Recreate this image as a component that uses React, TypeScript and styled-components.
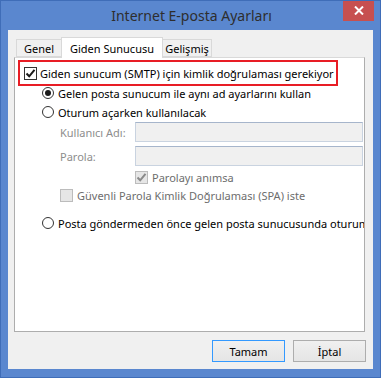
import React from "react";
import styled, {createGlobalStyle} from "styled-components";

const Global = createGlobalStyle`
  html, body {
    margin: 0;
    padding: 0;
    background: #5a87cf;
  }
  * {
    box-sizing: border-box;
  }
`

const Window = styled.div`
  width: 381px;
  height: 378px;
  display: flex;
  flex-direction: column;
  background: #5a87cf;
  border: 1px solid #3f6db8;
  font-family: "Noto Sans", "Open Sans", sans-serif;
  font-size: 11px;
  color: #000;
  overflow: hidden;
`

const TitleBar = styled.div`
  height: 30px;
  display: flex;
  align-items: flex-start;
  position: relative;
`

const Title = styled.div`
  flex: 1;
  text-align: center;
  font-size: 14px;
  color: #2e2e2e;
  padding-top: 5px;
  padding-left: 2px;
`

const CloseButton = styled.div`
  position: absolute;
  top: -1px;
  right: 6px;
  width: 31px;
  height: 21px;
  background: #c75050;
  display: flex;
  align-items: center;
  justify-content: center;
`

const Client = styled.div`
  flex: 1;
  margin: 0 7px 8px 7px;
  background: #f0f0f0;
  display: flex;
  flex-direction: column;
  padding: 7px 8px 7px 6px;
`

const TabRow = styled.div`
  display: flex;
  align-items: flex-end;
  height: 20px;
  padding-left: 2px;
  position: relative;
  z-index: 1;
`

const Tab = styled.div<{ $active?: boolean; $width: number }>`
  width: ${p => p.$width}px;
  height: ${p => (p.$active ? "21px" : "18px")};
  margin-bottom: ${p => (p.$active ? "-1px" : "0")};
  padding-top: ${p => (p.$active ? "3px" : "1px")};
  border: 1px solid #d9d9d9;
  border-bottom: ${p => (p.$active ? "none" : "1px solid #d9d9d9")};
  background: ${p => (p.$active ? "#ffffff" : "#f0f0f0")};
  margin-left: ${p => (p.$active ? "-1px" : "0")};
  margin-right: ${p => (p.$active ? "-1px" : "0")};
  color: #000;
  text-align: center;
  white-space: nowrap;
  line-height: 15px;
`

const Panel = styled.div`
  height: 275px;
  background: #fff;
  border: 1px solid #adadad;
  border-top-color: #d9d9d9;
  padding: 2px 0 0 3px;
  display: flex;
  flex-direction: column;
  overflow: hidden;
`

const Highlight = styled.div`
  width: 320px;
  height: 26px;
  flex: none;
  border: 2px solid #e81d25;
  display: flex;
  align-items: center;
  padding-left: 4px;
  gap: 3px;
  white-space: nowrap;
`

const Row = styled.div<{ $indent: number; $top: number; $muted?: boolean }>`
  display: flex;
  align-items: center;
  gap: 4px;
  padding-left: ${p => p.$indent}px;
  margin-top: ${p => p.$top}px;
  height: 16px;
  flex: none;
  white-space: nowrap;
  color: ${p => (p.$muted ? "#6d6d6d" : "#000")};
`

const FieldRow = styled.div<{ $top: number }>`
  display: flex;
  align-items: center;
  padding-left: 42px;
  margin-top: ${p => p.$top}px;
  height: 20px;
  flex: none;
`

const FieldLabel = styled.div`
  width: 75px;
  color: #8d8d8d;
`

const Field = styled.div`
  width: 228px;
  height: 20px;
  background: #f0f0f0;
  border: 1px solid #c9d3e0;
  border-top-color: #a6b5cb;
`

const Box = styled.div<{ $disabled?: boolean }>`
  width: 13px;
  height: 13px;
  flex: none;
  border: 1px solid ${p => (p.$disabled ? "#bcbcbc" : "#333")};
  background: ${p => (p.$disabled ? "#e6e6e6" : "#fff")};
  display: flex;
  align-items: center;
  justify-content: center;
`

const Radio = styled.div<{ $on?: boolean }>`
  width: 12px;
  height: 12px;
  flex: none;
  border-radius: 50%;
  border: 1px solid #333;
  background: #fff;
  display: flex;
  align-items: center;
  justify-content: center;
  &::after {
    content: "";
    width: 6px;
    height: 6px;
    border-radius: 50%;
    background: ${p => (p.$on ? "#1a1a1a" : "transparent")};
  }
`

const Footer = styled.div`
  display: flex;
  justify-content: flex-end;
  gap: 8px;
  margin-top: 8px;
`

const Button = styled.div<{ $default?: boolean }>`
  width: 73px;
  height: 22px;
  border: 1px solid ${p => (p.$default ? "#3399ff" : "#adadad")};
  background: linear-gradient(#f0f0f0, #e5e5e5);
  display: flex;
  align-items: center;
  justify-content: center;
  margin-right: ${p => (p.$default ? "0" : "-1px")};
`

function Check({color}: { color: string }) {
  return (
    <svg width="11" height="11" viewBox="0 0 11 11">
      <path d="M1.5 5.5 L4.2 8.3 L9.5 1.8" fill="none" stroke={color} strokeWidth="2" />
    </svg>
  )
}

export default function App() {
  return (
    <>
      <Global />
      <Window>
        <TitleBar>
          <Title>Internet E-posta Ayarları</Title>
          <CloseButton>
            <svg width="10" height="9" viewBox="0 0 10 9">
              <path d="M1 0.5 L9 8.5 M9 0.5 L1 8.5" stroke="#fff" strokeWidth="2" />
            </svg>
          </CloseButton>
        </TitleBar>
        <Client>
          <TabRow>
            <Tab $width={46}>Genel</Tab>
            <Tab $active $width={102}>Giden Sunucusu</Tab>
            <Tab $width={50}>Gelişmiş</Tab>
          </TabRow>
          <Panel>
            <Highlight>
              <Box><Check color="#1a1a1a" /></Box>
              <span>Giden sunucum (SMTP) için kimlik doğrulaması gerekiyor</span>
            </Highlight>
            <Row $indent={24} $top={-1}>
              <Radio $on />
              <span>Gelen posta sunucum ile aynı ad ayarlarını kullan</span>
            </Row>
            <Row $indent={24} $top={3}>
              <Radio />
              <span>Oturum açarken kullanılacak</span>
            </Row>
            <FieldRow $top={2}>
              <FieldLabel>Kullanıcı Adı:</FieldLabel>
              <Field />
            </FieldRow>
            <FieldRow $top={4}>
              <FieldLabel>Parola:</FieldLabel>
              <Field />
            </FieldRow>
            <Row $indent={117} $top={3} $muted>
              <Box $disabled><Check color="#8a8a8a" /></Box>
              <span>Parolayı anımsa</span>
            </Row>
            <Row $indent={42} $top={2} $muted>
              <Box $disabled />
              <span>Güvenli Parola Kimlik Doğrulaması (SPA) iste</span>
            </Row>
            <Row $indent={24} $top={12}>
              <Radio />
              <span>Posta göndermeden önce gelen posta sunucusunda oturum açın</span>
            </Row>
          </Panel>
          <Footer>
            <Button $default>Tamam</Button>
            <Button>İptal</Button>
          </Footer>
        </Client>
      </Window>
    </>
  )
}
